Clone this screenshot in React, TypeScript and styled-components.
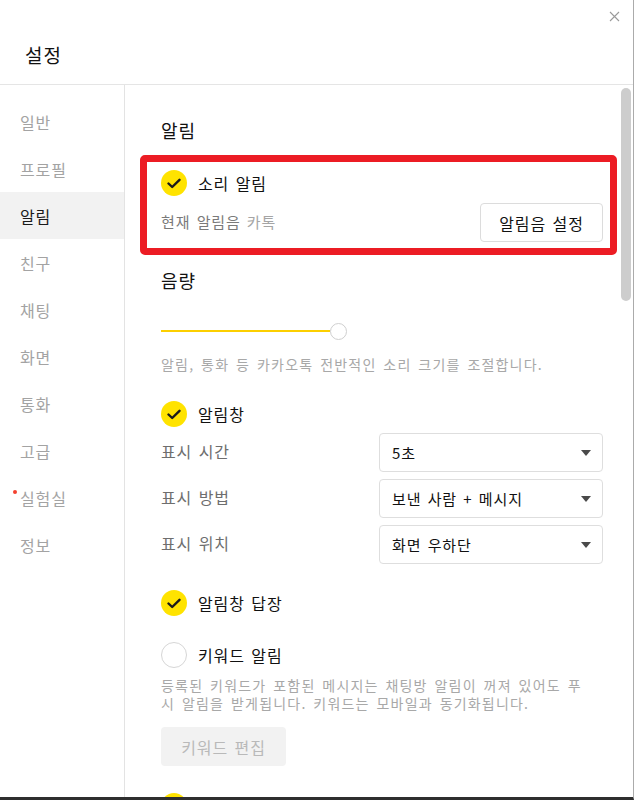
import React from "react";
import styled, { createGlobalStyle } from "styled-components";

const GlobalStyle = createGlobalStyle`
  html, body {
    margin: 0;
    padding: 0;
    background: #fff;
  }
  * {
    box-sizing: border-box;
  }
  body {
    font-family: "Noto Sans CJK KR", "Noto Sans", sans-serif;
    color: #222;
    letter-spacing: 0.9px;
    word-spacing: 2px;
  }
`;

const Window = styled.div`
  width: 634px;
  height: 800px;
  background: #fff;
  border-right: 1px solid #ababab;
  border-bottom: 3px solid #2e2e2e;
  display: flex;
  flex-direction: column;
  overflow: hidden;
`;

const Header = styled.div`
  height: 85px;
  border-bottom: 1px solid #e5e5e5;
  display: flex;
  flex-direction: column;
  flex-shrink: 0;
`;

const CloseRow = styled.div`
  height: 33px;
  display: flex;
  justify-content: flex-end;
  align-items: center;
  padding-right: 13px;
`;

const CloseButton = styled.button`
  border: 0;
  background: none;
  padding: 0;
  width: 11px;
  height: 11px;
  display: flex;
  color: #9a9a9a;
`;

const Title = styled.h1`
  margin: 0;
  padding-left: 25px;
  font-size: 19px;
  font-weight: 400;
  line-height: 44px;
  color: #111;
`;

const Body = styled.div`
  flex: 1;
  display: flex;
  min-height: 0;
`;

const Sidebar = styled.nav`
  width: 125px;
  flex-shrink: 0;
  border-right: 1px solid #e3e3e3;
  padding-top: 13px;
  display: flex;
  flex-direction: column;
`;

const NavItem = styled.div<{ $active?: boolean; $dot?: boolean }>`
  position: relative;
  height: 47px;
  display: flex;
  align-items: center;
  padding-left: 20px;
  font-size: 16px;
  color: ${(p) => (p.$active ? "#1a1a1a" : "#a3a3a3")};
  background: ${(p) => (p.$active ? "#f2f2f2" : "transparent")};

  &::before {
    content: "";
    display: ${(p) => (p.$dot ? "block" : "none")};
    position: absolute;
    left: 13px;
    top: 16px;
    width: 4px;
    height: 4px;
    border-radius: 50%;
    background: #f4402e;
  }
`;

const Content = styled.div`
  flex: 1;
  display: flex;
  min-width: 0;
`;

const Main = styled.div`
  flex: 1;
  padding: 32px 14px 0 36px;
  display: flex;
  flex-direction: column;
`;

const ScrollTrack = styled.div`
  width: 16px;
  flex-shrink: 0;
  padding: 3px 2px 0 4px;
`;

const ScrollThumb = styled.div`
  height: 213px;
  border-radius: 5px;
  background: #cdcdcd;
`;

const Heading = styled.h2<{ $mt?: number }>`
  margin: ${(p) => p.$mt ?? 0}px 0 0;
  font-size: 18px;
  font-weight: 400;
  line-height: 26px;
  color: #111;
`;

const Highlight = styled.section`
  position: relative;
  margin-top: 27px;

  &::after {
    content: "";
    position: absolute;
    top: -15px;
    left: -21px;
    right: -14px;
    bottom: -13px;
    border: 7px solid #ec1c24;
    border-radius: 5px;
    pointer-events: none;
  }
`;

const CheckRow = styled.div<{ $mt?: number }>`
  margin-top: ${(p) => p.$mt ?? 0}px;
  height: 26px;
  display: flex;
  align-items: center;
  gap: 11px;
  font-size: 16px;
  color: #111;
  flex-shrink: 0;
`;

const Circle = styled.span<{ $on: boolean }>`
  width: 26px;
  height: 26px;
  border-radius: 50%;
  flex-shrink: 0;
  display: flex;
  align-items: center;
  justify-content: center;
  background: ${(p) => (p.$on ? "#ffe300" : "#fff")};
  border: ${(p) => (p.$on ? "none" : "1px solid #d6d6d6")};
`;

const SoundRow = styled.div`
  margin-top: 7px;
  display: flex;
  align-items: center;
  justify-content: space-between;
`;

const SoundLabel = styled.span`
  font-size: 15px;
  color: #7a7a7a;
  padding-bottom: 2px;
`;

const SoundName = styled.span`
  margin-left: 6px;
  color: #a5a5a5;
`;

const OutlineButton = styled.button`
  height: 39px;
  width: 123px;
  border: 1px solid #dcdcdc;
  border-radius: 4px;
  background: #fff;
  font-family: inherit;
  letter-spacing: inherit;
  word-spacing: inherit;
  font-size: 16px;
  color: #111;
`;

const Slider = styled.div`
  margin-top: 29px;
  height: 18px;
  width: 186px;
  display: flex;
  align-items: center;
  flex-shrink: 0;
`;

const SliderFill = styled.div`
  flex: 1;
  height: 2px;
  background: #fccf00;
`;

const SliderThumb = styled.div`
  width: 17px;
  height: 17px;
  border-radius: 50%;
  border: 1px solid #cfcfcf;
  background: #fff;
`;

const Desc = styled.p<{ $mt?: number }>`
  margin: ${(p) => p.$mt ?? 0}px 0 0;
  font-size: 14px;
  line-height: 18px;
  letter-spacing: 1.2px;
  word-spacing: 2.5px;
  color: #a8a8a8;
  flex-shrink: 0;
`;

const SelectList = styled.div`
  margin-top: 6px;
  display: flex;
  flex-direction: column;
  gap: 7px;
`;

const SelectRow = styled.div`
  display: flex;
  align-items: center;
  justify-content: space-between;
`;

const FieldLabel = styled.span`
  font-size: 16px;
  color: #6e6e6e;
  padding-bottom: 3px;
`;

const Select = styled.div`
  width: 224px;
  height: 39px;
  border: 1px solid #dedede;
  border-radius: 4px;
  display: flex;
  align-items: center;
  justify-content: space-between;
  padding: 0 11px 0 12px;
  font-size: 15px;
  color: #111;
`;

const Caret = styled.span`
  width: 0;
  height: 0;
  border-left: 5px solid transparent;
  border-right: 5px solid transparent;
  border-top: 6px solid #4a4a4a;
`;

const DisabledButton = styled.button`
  margin-top: 15px;
  width: 125px;
  height: 39px;
  border: 0;
  border-radius: 4px;
  background: #f2f2f2;
  font-family: inherit;
  letter-spacing: inherit;
  word-spacing: inherit;
  font-size: 16px;
  color: #b9b9b9;
  flex-shrink: 0;
`;

const Check = ({ on }: { on: boolean }) => (
  <Circle $on={on}>
    {on && (
      <svg width="14" height="11" viewBox="0 0 14 11" fill="none">
        <path
          d="M1.5 5.5 L5.2 9 L12.5 1.8"
          stroke="#1a1a1a"
          strokeWidth="2.4"
          strokeLinecap="round"
          strokeLinejoin="round"
        />
      </svg>
    )}
  </Circle>
);

const menu = ["일반", "프로필", "알림", "친구", "채팅", "화면", "통화", "고급", "실험실", "정보"];

const selects = [
  { label: "표시 시간", value: "5초" },
  { label: "표시 방법", value: "보낸 사람 + 메시지" },
  { label: "표시 위치", value: "화면 우하단" },
];

export default function App() {
  return (
    <>
      <GlobalStyle />
      <Window>
        <Header>
          <CloseRow>
            <CloseButton aria-label="닫기">
              <svg width="11" height="11" viewBox="0 0 11 11">
                <path d="M1 1 L10 10 M10 1 L1 10" stroke="currentColor" strokeWidth="1.1" />
              </svg>
            </CloseButton>
          </CloseRow>
          <Title>설정</Title>
        </Header>
        <Body>
          <Sidebar>
            {menu.map((m) => (
              <NavItem key={m} $active={m === "알림"} $dot={m === "실험실"}>
                {m}
              </NavItem>
            ))}
          </Sidebar>
          <Content>
            <Main>
              <Heading>알림</Heading>
              <Highlight>
                <CheckRow>
                  <Check on />
                  소리 알림
                </CheckRow>
                <SoundRow>
                  <SoundLabel>
                    현재 알림음<SoundName>카톡</SoundName>
                  </SoundLabel>
                  <OutlineButton>알림음 설정</OutlineButton>
                </SoundRow>
              </Highlight>

              <Heading $mt={25}>음량</Heading>
              <Slider>
                <SliderFill />
                <SliderThumb />
              </Slider>
              <Desc $mt={15}>알림, 통화 등 카카오톡 전반적인 소리 크기를 조절합니다.</Desc>

              <CheckRow $mt={28}>
                <Check on />
                알림창
              </CheckRow>
              <SelectList>
                {selects.map((s) => (
                  <SelectRow key={s.label}>
                    <FieldLabel>{s.label}</FieldLabel>
                    <Select>
                      {s.value}
                      <Caret />
                    </Select>
                  </SelectRow>
                ))}
              </SelectList>

              <CheckRow $mt={26}>
                <Check on />
                알림창 답장
              </CheckRow>
              <CheckRow $mt={26}>
                <Check on={false} />
                키워드 알림
              </CheckRow>
              <Desc $mt={8}>
                등록된 키워드가 포함된 메시지는 채팅방 알림이 꺼져 있어도 푸
                <br />
                시 알림을 받게됩니다. 키워드는 모바일과 동기화됩니다.
              </Desc>
              <DisabledButton>키워드 편집</DisabledButton>
              <CheckRow $mt={27}>
                <Check on />
                메시지 미리보기
              </CheckRow>
            </Main>
            <ScrollTrack>
              <ScrollThumb />
            </ScrollTrack>
          </Content>
        </Body>
      </Window>
    </>
  );
}
